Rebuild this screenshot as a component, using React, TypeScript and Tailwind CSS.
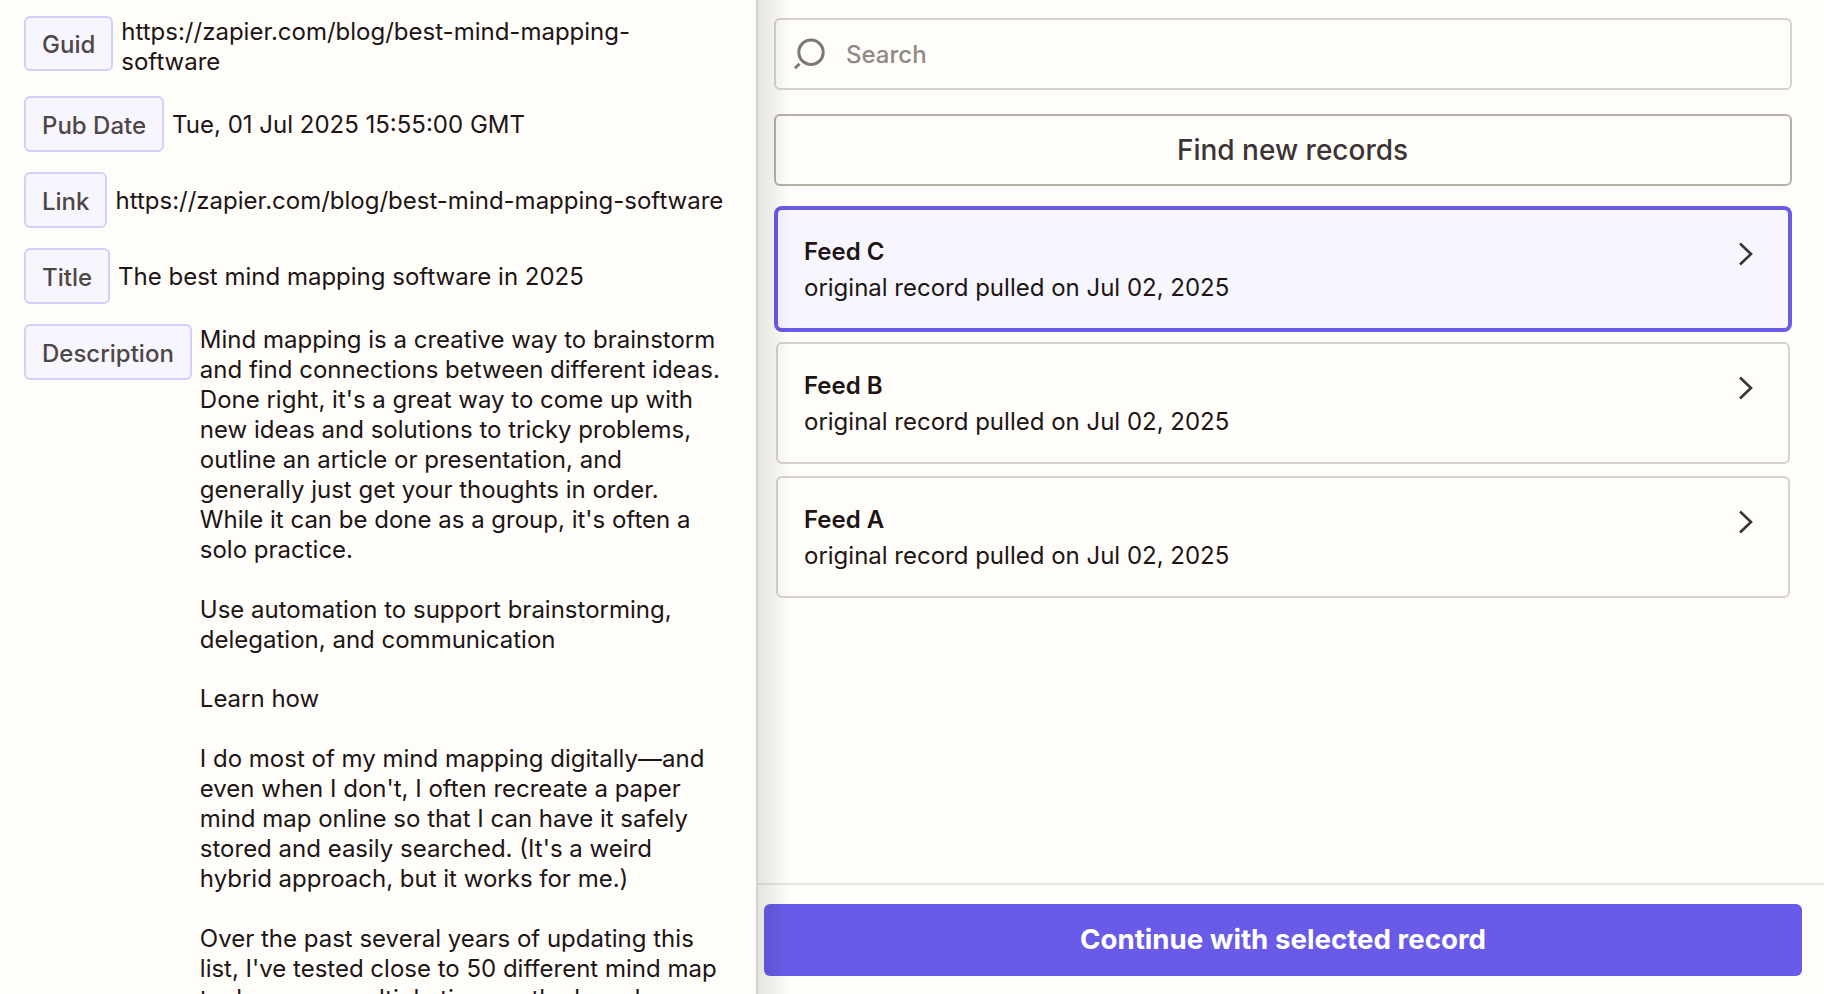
import React from "react";

function Row({ label, children }: { label: string; children: React.ReactNode }) {
  return (
    <div className="flex items-start gap-2">
      <div className="flex h-[55.5px] shrink-0 items-center rounded-md border-2 border-[#d3d0fb] bg-[#f7f6fe] px-4 pt-[4px] font-medium text-[#4f4646]">
        {label}
      </div>
      <div className="flex min-h-[55.5px] min-w-0 items-center">
        <div className="-mb-px whitespace-pre-line pt-px">{children}</div>
      </div>
    </div>
  );
}

function Feed({ name, selected }: { name: string; selected?: boolean }) {
  return (
    <div
      className={
        selected
          ? "flex h-[121.5px] items-start justify-between rounded-md border-2 border-[#695be8] bg-[#f7f6fe] pl-[26px] pr-[35.5px] pt-[23.5px] ring-2 ring-[#695be8]"
          : "flex h-[121.5px] items-start justify-between rounded-md border-2 border-[#d6d3cb] pl-[26px] pr-[35.5px] pt-[23.5px]"
      }
    >
      <div className="text-[#201515]">
        <div className="text-[24px] font-semibold leading-[36px]">{name}</div>
        <div className="text-[24px] leading-[36px]">original record pulled on Jul 02, 2025</div>
      </div>
      <svg width="16" height="24" viewBox="0 0 16 24" fill="none" className="mt-[8px]">
        <path d="M3 1.5 L14 12 L3 22.5" stroke="#3d3535" strokeWidth="2.6" />
      </svg>
    </div>
  );
}

const description = `Mind mapping is a creative way to brainstorm and find connections between different ideas. Done right, it's a great way to come up with new ideas and solutions to tricky problems, outline an article or presentation, and generally just get your thoughts in order. While it can be done as a group, it's often a solo practice.

Use automation to support brainstorming, delegation, and communication

Learn how

I do most of my mind mapping digitally—and even when I don't, I often recreate a paper mind map online so that I can have it safely stored and easily searched. (It's a weird hybrid approach, but it works for me.)

Over the past several years of updating this list, I've tested close to 50 different mind map tools across multiple tiers on the board`;

export default function App() {
  return (
    <div className="flex h-screen w-full overflow-hidden bg-[#fffdf9] font-[Inter,sans-serif] text-[24px] leading-[30px] text-[#201515]">
      <div className="flex w-[758px] shrink-0 flex-col gap-[20.5px] overflow-hidden border-r-2 border-[#d6d3cb] pl-6 pr-[30px] pt-[15.5px]">
        <Row label="Guid">https://zapier.com/blog/best-mind-mapping-software</Row>
        <Row label="Pub Date">Tue, 01 Jul 2025 15:55:00 GMT</Row>
        <Row label="Link">https://zapier.com/blog/best-mind-mapping-software</Row>
        <Row label="Title">The best mind mapping software in 2025</Row>
        <Row label="Description">
          <div className="leading-[29.96px]">{description}</div>
        </Row>
      </div>

      <div className="relative flex min-w-0 flex-1 flex-col">
        <div className="flex flex-1 flex-col overflow-hidden pl-4 pr-8 pt-[18px]">
          <div className="flex h-[72px] shrink-0 items-center rounded-md border-2 border-[#d6d3cb] pl-[17px]">
            <svg width="34" height="34" viewBox="0 0 34 34" fill="none" className="shrink-0">
              <circle cx="18" cy="15.3" r="12.2" stroke="#7d7776" strokeWidth="3" />
              <path d="M6.5 26.8 L2 31.3" stroke="#7d7776" strokeWidth="3" />
            </svg>
            <span className="ml-[19px] pt-[2px] font-medium text-[#8f8a87]">Search</span>
          </div>
          <div className="mt-6 flex h-[72px] shrink-0 items-center justify-center rounded-md border-2 border-[#b5b2a8] pl-[19px] text-[28px] font-medium text-[#3d3535]">
            Find new records
          </div>
          <div className="mt-[22px] flex flex-col gap-[12.5px] px-0.5">
            <Feed name="Feed C" selected />
            <Feed name="Feed B" />
            <Feed name="Feed A" />
          </div>
        </div>
        <div className="shrink-0 border-t-2 border-[#e8e6e1] pb-[18px] pl-1.5 pr-[22px] pt-[19px]">
          <div className="flex h-[72px] items-center justify-center rounded-md bg-[#695be8] pb-[2px] text-[27.7px] font-bold text-white">
            Continue with selected record
          </div>
        </div>
        <div className="pointer-events-none absolute inset-y-0 left-0 w-8 bg-linear-to-r from-black/10 to-transparent" />
      </div>
    </div>
  );
}
